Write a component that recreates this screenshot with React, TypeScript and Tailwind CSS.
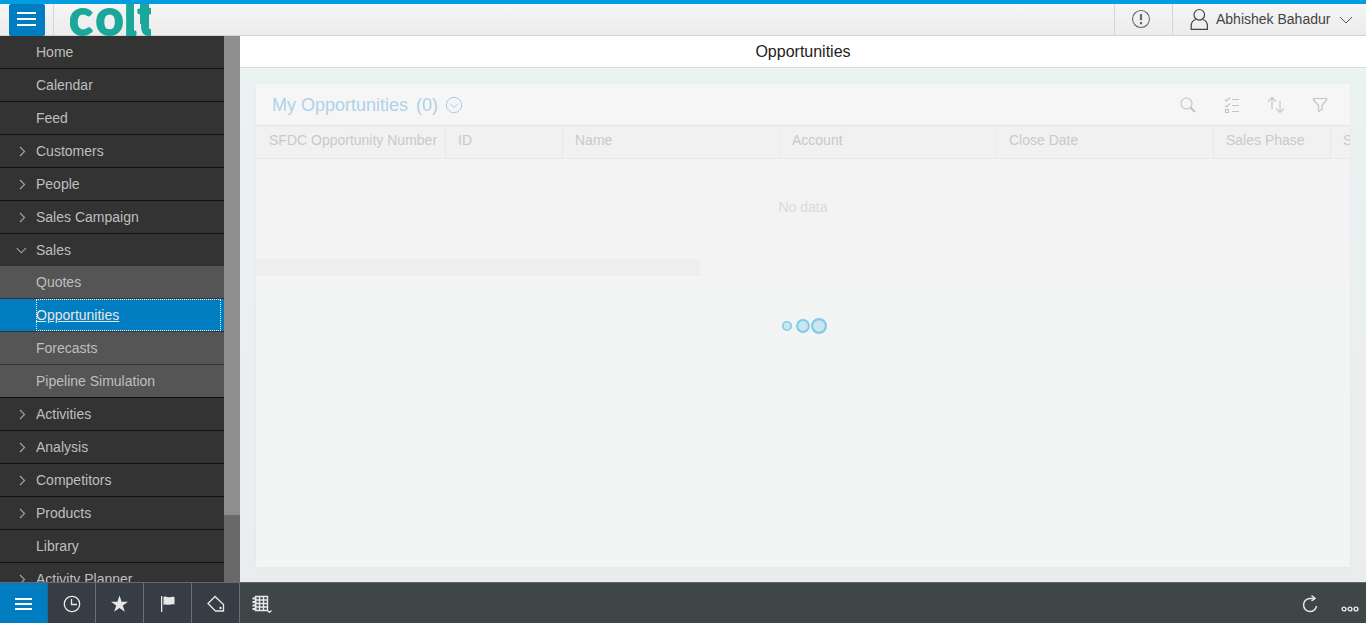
import React from "react";

type Item = { label: string; kind?: "leaf" | "closed" | "open" | "sub" | "active" };

const items: Item[] = [
  { label: "Home", kind: "leaf" },
  { label: "Calendar", kind: "leaf" },
  { label: "Feed", kind: "leaf" },
  { label: "Customers", kind: "closed" },
  { label: "People", kind: "closed" },
  { label: "Sales Campaign", kind: "closed" },
  { label: "Sales", kind: "open" },
  { label: "Quotes", kind: "sub" },
  { label: "Opportunities", kind: "active" },
  { label: "Forecasts", kind: "sub" },
  { label: "Pipeline Simulation", kind: "sub" },
  { label: "Activities", kind: "closed" },
  { label: "Analysis", kind: "closed" },
  { label: "Competitors", kind: "closed" },
  { label: "Products", kind: "closed" },
  { label: "Library", kind: "leaf" },
  { label: "Activity Planner", kind: "closed" },
];

function Logo() {
  return (
    <svg width="81" height="32" viewBox="0 0 81 32" className="block shrink-0 overflow-hidden">
      <text
        x="-1 25.500 54 67.500"
        y="31"
        fontFamily="Lato"
        fontWeight="700"
        fontSize="49"
        fill="#1ba79a"
        stroke="#1ba79a"
        strokeWidth="1.800"
      >
        colt
      </text>
      <rect x="57" y="26.500" width="9.500" height="5.500" rx="1.500" fill="#1ba79a" />
      <rect x="70" y="0" width="6" height="20" fill="#1ba79a" />
    </svg>
  );
}

function NavRow({ label, kind }: Item) {
  if (kind === "active") {
    return (
      <div className="flex h-[33px] shrink-0 border-b border-[#333] bg-[#007cc0] pl-9 pr-[3px]">
        <div className="flex flex-1 items-center border border-dotted border-white text-[#e6e6e6]">
          <span className="-ml-px underline">{label}</span>
        </div>
      </div>
    );
  }
  if (kind === "sub") {
    const first = label === "Quotes";
    const last = label === "Pipeline Simulation";
    return (
      <div
        className={`flex h-[33px] shrink-0 items-center border-b bg-[#555] pl-9 ${last ? "border-[#111]" : "border-[#333]"} ${first ? "-mt-px" : ""}`}
      >
        {label}
      </div>
    );
  }
  return (
    <div className="flex h-[33px] shrink-0 items-center border-b border-[#111] bg-[#333]">
      <div className="flex w-9 shrink-0 pl-4">
        {kind === "closed" && (
          <svg width="12" height="12" viewBox="0 0 12 12" fill="none" stroke="#a5a5a5" strokeWidth="1.1">
            <path d="M4 2l4.5 4.5L4 11" />
          </svg>
        )}
        {kind === "open" && (
          <svg width="12" height="12" viewBox="0 0 12 12" fill="none" stroke="#a5a5a5" strokeWidth="1.1">
            <path d="M.7 4.2l4.6 4.6 4.6-4.6" />
          </svg>
        )}
      </div>
      <span>{label}</span>
    </div>
  );
}

function Header() {
  return (
    <header className="flex h-9 shrink-0 border-b border-t-4 border-b-[#d3d3d3] border-t-[#009de0] bg-linear-to-b from-[#f5f5f5] to-[#ececec]">
      <div className="flex w-[54px] shrink-0 border-r border-[#d5d5d5] pl-[9px]">
        <div className="-mb-px flex w-9 flex-col items-center gap-1 rounded-[2px] bg-[#007cc0] pr-px pt-2">
          <i className="h-0.5 w-[19px] bg-white" />
          <i className="h-0.5 w-[19px] bg-white" />
          <i className="h-0.5 w-[19px] bg-white" />
        </div>
      </div>
      <div className="flex flex-1 pl-4">
        <Logo />
      </div>
      <div className="flex w-[58px] justify-center border-l border-[#d5d5d5] pr-[5px] pt-[5px]">
        <svg width="20" height="20" viewBox="0 0 20 20" fill="none" stroke="#6a6a6a">
          <circle cx="10" cy="10" r="8.5" strokeWidth="1.100" />
          <path d="M10 5v6.2M10 13v2.2" strokeWidth="2.2" />
        </svg>
      </div>
      <div className="flex w-[194px] items-center border-l border-[#d5d5d5] pl-[17px]">
        <svg width="19" height="23" viewBox="0 0 19 23" fill="none" stroke="#444" strokeWidth="1.200">
          <circle cx="9.300" cy="6.800" r="5.300" />
          <path d="M5.800 11.500C2.500 12.500 1.200 14.500 1.200 18v3.400h16.200V18c0-3.500-1.300-5.500-4.600-6.500" />
        </svg>
        <span className="ml-[7px] text-[14px] text-[#444]">Abhishek Bahadur</span>
        <svg width="14" height="10" viewBox="0 0 14 10" fill="none" stroke="#555" className="ml-[9px]">
          <path d="M1 2l6 6 6-6" />
        </svg>
      </div>
    </header>
  );
}

const columns: { label: string; cls: string }[] = [
  { label: "SFDC Opportunity Number", cls: "w-[190px] pl-[13px] border-r" },
  { label: "ID", cls: "w-[117px] pl-3 border-r" },
  { label: "Name", cls: "w-[217px] pl-3 border-r" },
  { label: "Account", cls: "w-[217px] pl-3 border-r" },
  { label: "Close Date", cls: "w-[217px] pl-3 border-r" },
  { label: "Sales Phase", cls: "w-[117px] pl-3 border-r" },
  { label: "Status", cls: "w-[117px] pl-3" },
];

function Panel() {
  return (
    <section className="flex flex-1 flex-col overflow-hidden bg-[#f3f5f5] shadow-[0_0_4px_rgba(0,0,0,0.03)]">
      <div className="flex h-[42px] shrink-0 items-center border-b border-[#e4e4e4] bg-[#f6f6f6] pl-4 pr-5 text-[#add2e8]">
        <span className="whitespace-pre pt-px text-[18px]">My Opportunities</span>
        <span className="ml-2 pt-px text-[18px]">(0)</span>
        <svg width="18" height="18" viewBox="0 0 18 18" fill="none" stroke="#a5cfe8" className="ml-[7px]">
          <circle cx="9" cy="9" r="7.7" />
          <path d="M5 7.5l4 4 4-4" />
        </svg>
        <div className="ml-auto flex gap-6 text-[#c4c4c4]">
          <svg width="20" height="20" viewBox="0 0 20 20" fill="none" stroke="currentColor">
            <circle cx="8.500" cy="8.500" r="5.500" strokeWidth="1.200" />
            <path d="M12.500 12.500l4.500 4.500" strokeWidth="2" />
          </svg>
          <svg width="20" height="20" viewBox="0 0 20 20" fill="none" stroke="currentColor" strokeWidth="1.100">
            <path d="M10 4.500h7M10 10.500h7M10 16.500h7M3 4.500l1.500 1.500L8 2.500M3 10.500L4.500 12 8 8.500" />
            <path d="M3.500 14.500h3v3h-3z" />
          </svg>
          <svg width="20" height="20" viewBox="0 0 20 20" fill="none" strokeWidth="1.200">
            <path d="M6 14V2.500M2 6.500l4-4 4 4" stroke="#c3c8cc" />
            <path d="M14 6v11.500M10 13.500l4 4 4-4" stroke="#c0cdd6" />
          </svg>
          <svg width="20" height="20" viewBox="0 0 20 20" fill="none" stroke="currentColor" strokeWidth="1.200">
            <path d="M3.500 3.500h13v1.500L12 10.500V14.500L8.500 16.500V10.500L3.500 5z" />
          </svg>
        </div>
      </div>
      <div className="flex h-[33px] shrink-0 overflow-hidden border-b border-[#e9e9e9] bg-[#f1f1f1] text-[14px] text-[#c9c9c9]">
        {columns.map((c) => (
          <div key={c.label} className={`shrink-0 whitespace-nowrap border-[#e9e9e9] pt-1 leading-[21px] ${c.cls}`}>
            {c.label}
          </div>
        ))}
      </div>
      <div className="flex h-[100px] shrink-0 items-center justify-center bg-[#f3f3f3] pb-[3px] text-[14px] text-[#dadada]">
        No data
      </div>
      <div className="flex h-[17px] shrink-0 border-b border-[#efefef] bg-[#f3f3f3]">
        <div className="w-[444px] bg-[#eeeeee]" />
      </div>
      <div className="flex justify-center pl-px pt-[41px]">
        <svg width="48" height="18" viewBox="0 0 48 18" fill="#cbe5f1" stroke="#80caea">
          <circle cx="7" cy="9" r="4.200" strokeWidth="1.600" />
          <circle cx="23" cy="9" r="5.900" strokeWidth="2" />
          <circle cx="39" cy="9" r="6.900" strokeWidth="2.200" />
        </svg>
      </div>
    </section>
  );
}

function Footer() {
  const cell = "flex w-12 items-center justify-center border-r border-[#6b7073] bg-[#363d44]";
  return (
    <footer className="flex h-[41px] shrink-0 border-t border-[#65696b] bg-[#3f4648] text-[#e8e8e8]">
      <div className="flex w-12 flex-col items-center justify-center gap-[3px] border-r border-[#1c6b98] bg-[#007cc0] pt-px">
        <i className="h-0.5 w-[17px] bg-white" />
        <i className="h-0.5 w-[17px] bg-white" />
        <i className="h-0.5 w-[17px] bg-white" />
      </div>
      <div className={cell}>
        <svg width="20" height="20" viewBox="0 0 20 20" fill="none" stroke="currentColor" strokeWidth="1.300" className="mt-0.5">
          <circle cx="10" cy="10" r="7.700" />
          <path d="M9.500 5v5.500H15" />
        </svg>
      </div>
      <div className={cell}>
        <svg width="20" height="20" viewBox="0 0 20 20" fill="currentColor" className="mt-0.5">
          <path d="M9.500 1.500l2.100 6.200h6.400l-5.200 3.900 2 6.200-5.300-3.800-5.300 3.800 2-6.200-5.200-3.900h6.400z" />
        </svg>
      </div>
      <div className={cell}>
        <svg width="20" height="20" viewBox="0 0 20 20" fill="currentColor" className="mt-0.5">
          <path d="M3 2h1.300v16H3zM5.500 3c2.500-1.500 4 .8 6 .3 2-.6 3-.8 5-.3v7.500c-2-.5-3.500-.3-5 .2-2 .5-3.500-1-6 .2z" />
        </svg>
      </div>
      <div className={cell}>
        <svg width="20" height="20" viewBox="0 0 20 20" fill="none" stroke="currentColor" strokeWidth="1.300" className="mt-0.5">
          <path d="M9 2.500L2 9.500l7.500 7.500H17.500V10.500z" />
          <circle cx="14.500" cy="14" r="1.200" fill="currentColor" stroke="none" />
        </svg>
      </div>
      <div className="flex flex-1 items-center pl-[11px]">
        <svg width="22" height="20" viewBox="0 0 22 20" fill="none" stroke="currentColor" className="mt-0.5">
          <path d="M4.500 2.500h12v14h-12zM4 6h13M4 9.500h13M4 13h13M8.500 2v15M12.500 2v15" strokeWidth="1.400" />
          <path d="M1.500 4.500h4M1.500 8h4M1.500 11.500h4M1.500 15h4" strokeWidth="2" />
          <path d="M16.500 16.500l2 2 2-2" strokeWidth="1.200" />
        </svg>
      </div>
      <div className="flex items-center pr-[7px]">
        <svg width="20" height="20" viewBox="0 0 20 20" fill="none" stroke="currentColor" strokeWidth="1.500" className="mt-0.5">
          <path d="M14.500 4.500H9.500A6.500 6.500 0 1 0 16.500 12" />
          <path d="M11.500 1.500l3.500 3-3.500 2.500" />
        </svg>
        <svg width="18" height="8" viewBox="0 0 18 8" fill="none" stroke="currentColor" strokeWidth="1.400" className="ml-[21px] mt-[11px]">
          <circle cx="3" cy="4" r="1.900" />
          <circle cx="9" cy="4" r="1.900" />
          <circle cx="15" cy="4" r="1.900" />
        </svg>
      </div>
    </footer>
  );
}

export default function App() {
  return (
    <div className="flex h-[623px] w-[1366px] flex-col overflow-hidden font-['Liberation_Sans',Arial,sans-serif]">
      <Header />
      <div className="flex min-h-0 flex-1">
        <nav className="flex w-56 shrink-0 flex-col overflow-hidden bg-[#333] text-[14px] text-[#bfbfbf]">
          {items.map((it) => (
            <NavRow key={it.label} {...it} />
          ))}
        </nav>
        <div className="w-4 shrink-0 bg-[#696969]">
          <div className="h-[479px] bg-[#8e8e8e]" />
        </div>
        <main className="flex min-w-0 flex-1 flex-col">
          <div className="flex h-8 shrink-0 items-center justify-center border-b border-[#d6dcdc] bg-white text-[16px] text-[#222]">
            Opportunities
          </div>
          <div className="flex flex-1 bg-linear-to-b from-[#eaf2f2] to-[#ebecee] p-4 pb-[15px]">
            <Panel />
          </div>
        </main>
      </div>
      <Footer />
    </div>
  );
}
